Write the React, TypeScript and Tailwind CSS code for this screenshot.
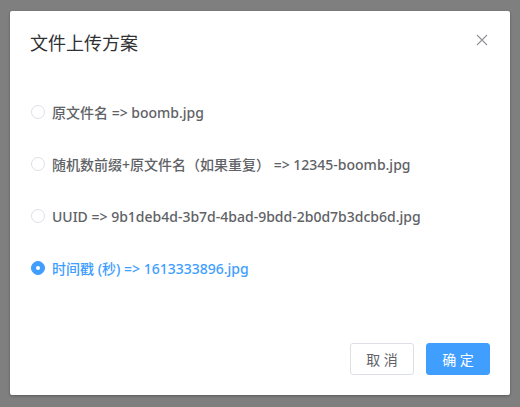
import { useState } from 'react';

const OPTIONS = [
  '原文件名 => boomb.jpg',
  '随机数前缀+原文件名（如果重复） => 12345-boomb.jpg',
  'UUID => 9b1deb4d-3b7d-4bad-9bdd-2b0d7b3dcb6d.jpg',
  '时间戳 (秒) => 1613333896.jpg',
];

export default function App() {
  const [picked, setPicked] = useState(3);

  return (
    <div
      className="flex h-[407px] w-[520px] items-start bg-[#7f7f7f] pl-[10px] pt-[11px]"
      style={{ fontFamily: '"Noto Sans", "Noto Sans CJK SC", sans-serif' }}
    >
      <div className="flex h-[384px] w-[500px] flex-col rounded-[2px] bg-white shadow-[0_1px_3px_rgba(0,0,0,0.3)]">
        <div className="flex items-start justify-between px-5 pt-5 pb-[10px]">
          <span className="text-[18px] leading-6 text-[#303133]">文件上传方案</span>
          <button type="button" className="mt-[2px] mr-[1px] text-[#909399]" aria-label="close">
            <svg width="14" height="14" viewBox="0 0 14 14" fill="none" stroke="currentColor" strokeWidth="1.1">
              <path d="M2 2 L12 12 M12 2 L2 12" />
            </svg>
          </button>
        </div>

        <div className="flex flex-col gap-8 px-5 pt-[37px]">
          {OPTIONS.map((label, i) => {
            const on = i === picked;
            return (
              <label
                key={i}
                onClick={() => setPicked(i)}
                className={`flex h-5 cursor-pointer items-center pl-[1px] text-[14px] font-medium ${
                  on ? 'text-[#409eff]' : 'text-[#606266]'
                }`}
              >
                <span
                  className={`mr-[7px] flex h-[14px] w-[14px] items-center justify-center rounded-full border ${
                    on ? 'border-[#409eff] bg-[#409eff]' : 'border-[#dcdfe6] bg-white'
                  }`}
                >
                  {on && <span className="h-1 w-1 rounded-full bg-white" />}
                </span>
                <span className="whitespace-pre">{label}</span>
              </label>
            );
          })}
        </div>

        <div className="mt-auto flex justify-end gap-3 px-5 pb-5">
          <button
            type="button"
            className="h-8 w-16 rounded-[3px] border border-[#dcdfe6] bg-white text-[14px] text-[#606266]"
          >
            取 消
          </button>
          <button
            type="button"
            className="h-8 w-16 rounded-[3px] border border-[#409eff] bg-[#409eff] text-[14px] text-white"
          >
            确 定
          </button>
        </div>
      </div>
    </div>
  );
}
